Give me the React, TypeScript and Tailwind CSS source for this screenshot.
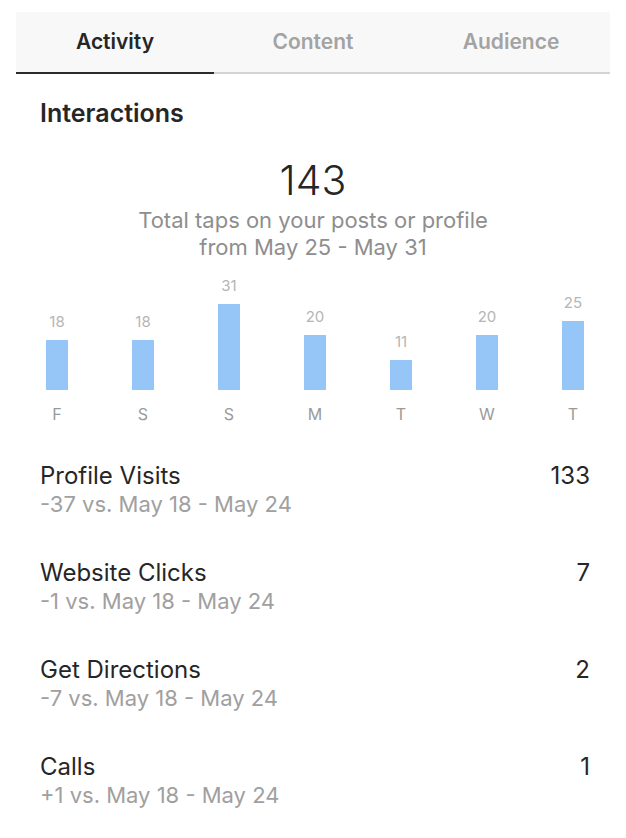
import React from 'react';

const bars = [
  { day: 'F', value: 18 },
  { day: 'S', value: 18 },
  { day: 'S', value: 31 },
  { day: 'M', value: 20 },
  { day: 'T', value: 11 },
  { day: 'W', value: 20 },
  { day: 'T', value: 25 },
];

const rows = [
  { title: 'Profile Visits', sub: '-37 vs. May 18 - May 24', value: '133' },
  { title: 'Website Clicks', sub: '-1 vs. May 18 - May 24', value: '7' },
  { title: 'Get Directions', sub: '-7 vs. May 18 - May 24', value: '2' },
  { title: 'Calls', sub: '+1 vs. May 18 - May 24', value: '1' },
];

const Tabs = () => (
  <div className="mx-4 mt-3 grid grid-cols-3 h-[62px] bg-[#f8f8f8] border-b-2 border-[#d4d4d4]">
    <div className="flex items-center justify-center text-[21px] font-semibold text-[#262626] border-b-2 border-[#2b2b2b] -mb-[2px]">
      Activity
    </div>
    <div className="flex items-center justify-center text-[21px] font-semibold text-[#a3a3a3]">
      Content
    </div>
    <div className="flex items-center justify-center text-[21px] font-semibold text-[#a3a3a3]">
      Audience
    </div>
  </div>
);

const Chart = () => (
  <div className="mt-[16px] pl-[42px] pr-[38px]">
    <div className="flex justify-between items-end h-[113px]">
      {bars.map((b, i) => (
        <div key={i} className="w-[30px] flex flex-col items-center">
          <span className="text-[15px] leading-[18px] text-[#b5b5b5] mb-[9px]">{b.value}</span>
          <div className="w-[22px] bg-[#96c6f8]" style={{ height: Math.round(b.value * 2.77) }} />
        </div>
      ))}
    </div>
    <div className="flex justify-between mt-[14px]">
      {bars.map((b, i) => (
        <span key={i} className="w-[30px] text-center text-[16px] leading-[20px] text-[#9a9a9a]">
          {b.day}
        </span>
      ))}
    </div>
  </div>
);

export default function App() {
  return (
    <div className="w-[626px] h-[838px] overflow-hidden bg-white font-['Inter',sans-serif]">
      <Tabs />
      <h2 className="mt-[25px] pl-10 text-[25px] leading-[29px] font-semibold text-[#262626]">Interactions</h2>
      <div className="mt-[28px] text-center text-[41px] leading-[48px] font-light text-[#262626]">143</div>
      <p className="mt-[3px] text-center text-[22px] leading-[27px] text-[#8e8e8e]">
        Total taps on your posts or profile
        <br />
        from May 25 - May 31
      </p>
      <Chart />
      <div className="mt-[38px] pl-10 pr-9 flex flex-col gap-[42px]">
        {rows.map((r) => (
          <div key={r.title} className="flex justify-between">
            <div className="flex flex-col">
              <span className="text-[24px] leading-[28px] text-[#262626]">{r.title}</span>
              <span className="mt-[1px] text-[22px] leading-[26px] text-[#a0a0a0]">{r.sub}</span>
            </div>
            <span className="text-[24px] leading-[28px] text-[#262626]">{r.value}</span>
          </div>
        ))}
      </div>
    </div>
  );
}
